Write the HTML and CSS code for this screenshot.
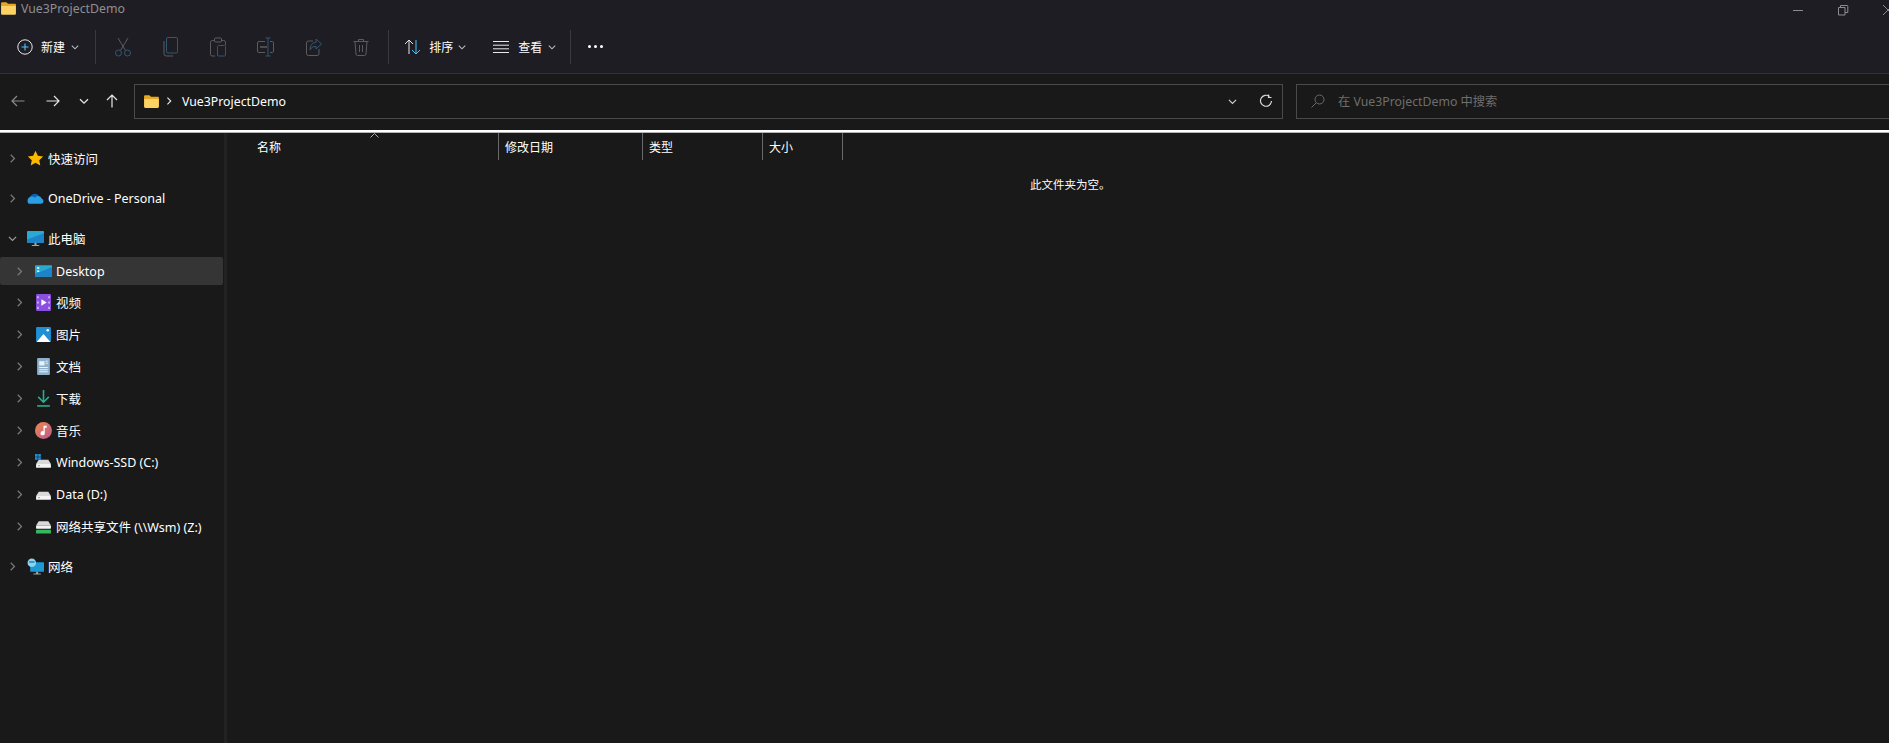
FILE: index.html
```html
<!DOCTYPE html>
<html lang="zh-CN">
<head>
    <meta charset="UTF-8">
    <title>Vue3ProjectDemo</title>
    <link rel="stylesheet" href="styles.css">
</head>
<body>
<svg class="defs" width="0" height="0">
    <symbol id="folder" viewBox="0 0 16 16">
        <path d="M1 3.2C1 2.5 1.5 2 2.2 2H6l1.6 1.6H14c.6 0 1 .4 1 1V6H1z" fill="#e6a823"/>
        <path d="M1 5.6h14v7.2c0 .7-.5 1.2-1.2 1.2H2.2C1.5 14 1 13.500 1 12.800z" fill="#fcd265"/>
    </symbol>
    <symbol id="chev-r" viewBox="0 0 10 10">
        <path d="M3 .8l4.200 4.200L3 9.200" fill="none" stroke="currentColor" stroke-width="1.400"/>
    </symbol>
    <symbol id="chev-d" viewBox="0 0 10 10">
        <path d="M1 3.200l4 4 4-4" fill="none" stroke="currentColor" stroke-width="1.300"/>
    </symbol>
    <symbol id="disk" viewBox="0 0 16 16">
        <path d="M3.500 5.500h9L15 9.500H1z" fill="#d9d9d9"/>
        <rect x="1" y="9.500" width="14" height="3.500" rx=".6" fill="#f4f4f4"/>
        <rect x="3" y="10.500" width="1.500" height="1" fill="#35c46a"/>
    </symbol>
</svg>

<div class="titlebar">
    <svg class="title-icon"><use href="#folder"/></svg>
    <span class="title-text">Vue3ProjectDemo</span>
    <div class="win-controls">
        <svg width="12" height="12" viewBox="0 0 12 12"><path d="M1 6.500h10" stroke="#8c8c8c"/></svg>
        <svg width="12" height="12" viewBox="0 0 12 12"><path d="M1.500 3.500h6.500v7.500H1.500zM3.500 3.500V1.500h6.500q.8 0 .8.800v6.200H8" fill="none" stroke="#8c8c8c"/></svg>
        <svg width="12" height="12" viewBox="0 0 12 12"><path d="M1 1l10 10M11 1L1 11" stroke="#8c8c8c"/></svg>
    </div>
</div>

<div class="toolbar">
    <div class="tb-btn tb-new">
        <svg width="16" height="16" viewBox="0 0 16 16"><circle cx="8" cy="8" r="7.200" fill="none" stroke="#e8e8e8"/><path d="M8 4.500v7M4.500 8h7" stroke="#4cc2ff" stroke-width="1.100"/></svg>
        <span>新建</span>
        <svg class="tb-chev"><use href="#chev-d"/></svg>
    </div>
    <div class="tb-sep"></div>
    <div class="tb-icon">
        <svg width="18" height="20" viewBox="0 0 18 20"><path d="M4 1l7.500 12.500M14 1L6.500 13.500" fill="none" stroke="#5c5c5c"/><circle cx="4.500" cy="16" r="3" fill="none" stroke="#2f5870"/><circle cx="13.500" cy="16" r="3" fill="none" stroke="#2f5870"/></svg>
    </div>
    <div class="tb-icon">
        <svg width="16" height="20" viewBox="0 0 16 20"><rect x="3.500" y=".5" width="11" height="15.500" rx="1.500" fill="none" stroke="#2f5870"/><path d="M1 4v12.500q0 2.500 2.500 2.500H10" fill="none" stroke="#5c5c5c"/></svg>
    </div>
    <div class="tb-icon">
        <svg width="16" height="20" viewBox="0 0 16 20"><path d="M4 3.500H2.500Q.5 3.500.5 5.500v12q0 1.500 2 1.500H5M11 3.500h2.500q2 0 2 2V8" fill="none" stroke="#5c5c5c"/><rect x="4.500" y="1" width="7" height="4" rx="1" fill="none" stroke="#5c5c5c"/><rect x="7.500" y="8.500" width="8" height="10.500" rx="1" fill="none" stroke="#2f5870"/></svg>
    </div>
    <div class="tb-icon">
        <svg width="17" height="20" viewBox="0 0 17 20"><path d="M8 4.500H2Q.5 4.500.5 6v8Q.5 15.500 2 15.500h6M13 4.500h2.500q1 0 1 1.500v8q0 1.500-1 1.500H13" fill="none" stroke="#5c5c5c"/><path d="M3 10h7" stroke="#5c5c5c" stroke-width="1.500"/><path d="M8.500 1h5M8.500 19h5M11 1v18" fill="none" stroke="#2f5870"/></svg>
    </div>
    <div class="tb-icon">
        <svg width="16" height="18" viewBox="0 0 16 18"><path d="M7 3H2.500Q.5 3 .5 5v10.500q0 2 2 2H11q2 0 2-2V11" fill="none" stroke="#5c5c5c"/><path d="M10 1l5.500 5-5.500 5V8.200q-4.500 0-6 3.800 0-7 6-7.700z" fill="none" stroke="#2f5870"/></svg>
    </div>
    <div class="tb-icon">
        <svg width="16" height="18" viewBox="0 0 16 18"><path d="M.5 3.500h15M5.500 3.500V1.500h5v2M2 3.500l1 12.500q.2 1.500 1.500 1.500h7q1.300 0 1.500-1.500l1-12.500M6.500 7v7M9.500 7v7" fill="none" stroke="#5c5c5c"/></svg>
    </div>
    <div class="tb-sep"></div>
    <div class="tb-btn tb-sort">
        <svg width="18" height="16" viewBox="0 0 18 16"><path d="M5 15V1M1 5l4-4 4 4" fill="none" stroke="#e8e8e8"/><path d="M12 1v14M8 11l4 4 4-4" fill="none" stroke="#4cc2ff"/></svg>
        <span>排序</span>
        <svg class="tb-chev"><use href="#chev-d"/></svg>
    </div>
    <div class="tb-btn tb-view">
        <svg width="16" height="12" viewBox="0 0 16 12"><path d="M0 .5h16M0 4.200h16M0 7.800h16M0 11.500h16" stroke="#e8e8e8"/></svg>
        <span>查看</span>
        <svg class="tb-chev"><use href="#chev-d"/></svg>
    </div>
    <div class="tb-sep"></div>
    <div class="tb-more"><i></i><i></i><i></i></div>
</div>

<div class="navbar">
    <div class="nav-btns">
        <svg class="nav-dim" width="14" height="14" viewBox="0 0 14 14"><path d="M13.500 7H1M6 2L1 7l5 5" fill="none" stroke="currentColor" stroke-width="1.200"/></svg>
        <svg width="14" height="14" viewBox="0 0 14 14"><path d="M.5 7H13M8 2l5 5-5 5" fill="none" stroke="currentColor" stroke-width="1.200"/></svg>
        <svg class="nav-chev"><use href="#chev-d"/></svg>
        <svg width="14" height="14" viewBox="0 0 14 14"><path d="M7 13.500V1M2 6l5-5 5 5" fill="none" stroke="currentColor" stroke-width="1.200"/></svg>
    </div>
    <div class="address">
        <svg class="addr-folder"><use href="#folder"/></svg>
        <svg class="addr-arrow"><use href="#chev-r"/></svg>
        <span class="addr-text">Vue3ProjectDemo</span>
        <svg class="addr-chev"><use href="#chev-d"/></svg>
        <svg class="addr-refresh" width="14" height="14" viewBox="0 0 14 14"><path d="M10.500 2.500A5.500 5.500 0 1 0 12.500 7" fill="none" stroke="currentColor" stroke-width="1.200"/><path d="M9.500 .5v3h3" fill="none" stroke="currentColor" stroke-width="1.200"/></svg>
    </div>
    <div class="search">
        <svg width="14" height="14" viewBox="0 0 14 14"><circle cx="8.500" cy="5.500" r="4.500" fill="none" stroke="#6b6b6b"/><path d="M5.200 8.800L.5 13.500" stroke="#6b6b6b"/></svg>
        <span>在 Vue3ProjectDemo 中搜索</span>
    </div>
</div>

<div class="rule"></div>

<div class="main">
    <div class="sidebar">
        <div class="tree-group">
            <div class="row">
                <svg class="chev"><use href="#chev-r"/></svg>
                <svg class="ico" viewBox="0 0 16 16"><path d="M8 .8l2.200 4.700 5 .6-3.700 3.500 1 5L8 12.100l-4.500 2.500 1-5L.8 6.100l5-.6z" fill="#fdb900"/></svg>
                <span>快速访问</span>
            </div>
        </div>
        <div class="tree-group">
            <div class="row">
                <svg class="chev"><use href="#chev-r"/></svg>
                <svg class="ico" viewBox="0 0 16 16"><path d="M3 8.500a4.500 4.500 0 0 1 8.500-2.500 3.500 3.500 0 0 1 2 2.500z" fill="#0a64b4"/><path d="M1.600 13h11.500a2.500 2.500 0 0 0 .6-4.900 3.500 3.500 0 0 0-6.300-.8A3 3 0 0 0 1.600 13z" fill="#2a9fe6"/></svg>
                <span>OneDrive - Personal</span>
            </div>
        </div>
        <div class="tree-group">
            <div class="row">
                <svg class="chev chev-open"><use href="#chev-d"/></svg>
                <svg class="ico" viewBox="0 0 16 16"><rect x="0" y="1" width="16" height="11" rx=".8" fill="#2aa9d3"/><path d="M0 9l16-6v8.200q0 .8-.8.800H.8Q0 12 0 11.200z" fill="#1d84c9"/><path d="M7 12h2v2H7zM4.500 14h7v1h-7z" fill="#9aa5ad"/></svg>
                <span>此电脑</span>
            </div>
            <div class="row row-child row-active">
                <svg class="chev"><use href="#chev-r"/></svg>
                <svg class="ico" viewBox="0 0 16 16"><rect x="0" y="2" width="16" height="11" rx=".8" fill="#2aa9d3"/><path d="M0 10l16-6v8.200q0 .8-.8.800H.8Q0 13 0 12.200z" fill="#1d84c9"/><path d="M2 4h2v1.500H2zM2 7h2v1.500H2z" fill="#fff"/></svg>
                <span>Desktop</span>
            </div>
            <div class="row row-child">
                <svg class="chev"><use href="#chev-r"/></svg>
                <svg class="ico" viewBox="0 0 16 16"><rect x="1" y="0" width="14" height="16" rx="1" fill="#8a4fe0"/><path d="M2 2h1.500v2H2zM2 7h1.500v2H2zM2 12h1.500v2H2zM12.500 2H14v2h-1.500zM12.500 7H14v2h-1.500zM12.500 12H14v2h-1.500z" fill="#d5bcf7"/><path d="M6 5l5 3-5 3z" fill="#fff"/></svg>
                <span>视频</span>
            </div>
            <div class="row row-child">
                <svg class="chev"><use href="#chev-r"/></svg>
                <svg class="ico" viewBox="0 0 16 16"><rect x="1" y="1" width="14" height="14" rx="1" fill="#1f8fd6"/><path d="M1.500 15L8 7.500 14.500 15z" fill="#fff"/><circle cx="12" cy="4" r="1.200" fill="#fff"/></svg>
                <span>图片</span>
            </div>
            <div class="row row-child">
                <svg class="chev"><use href="#chev-r"/></svg>
                <svg class="ico" viewBox="0 0 16 16"><rect x="2" y="0" width="12" height="16" rx="1" fill="#8fb0cc"/><path d="M4 3h5v4H4z" fill="#e9f0f6"/><path d="M10 3h2M10 5h2M4 9h8M4 11h8M4 13h8" stroke="#e9f0f6"/></svg>
                <span>文档</span>
            </div>
            <div class="row row-child">
                <svg class="chev"><use href="#chev-r"/></svg>
                <svg class="ico" viewBox="0 0 16 16"><path d="M8 0v11M3 6.500l5 5 5-5" fill="none" stroke="#27b08f" stroke-width="1.500"/><path d="M2 15h12" stroke="#27b08f" stroke-width="1.500"/></svg>
                <span>下载</span>
            </div>
            <div class="row row-child">
                <svg class="chev"><use href="#chev-r"/></svg>
                <svg class="ico" viewBox="0 0 16 16"><defs><linearGradient id="musicfill" x1="0" y1="0" x2="1" y2="1"><stop offset="0" stop-color="#ee8a50"/><stop offset="1" stop-color="#b9588f"/></linearGradient></defs><circle cx="8" cy="8" r="8" fill="url(#musicfill)"/><path d="M8 3.500h3v1.800H9.200v5.200a2 2 0 1 1-1.200-1.800z" fill="#fff"/></svg>
                <span>音乐</span>
            </div>
            <div class="row row-child">
                <svg class="chev"><use href="#chev-r"/></svg>
                <svg class="ico" viewBox="0 0 16 16"><use href="#disk"/><path d="M0 0h2.500v2.500H0zM3 0h2.500v2.500H3zM0 3h2.500v2.500H0zM3 3h2.500v2.500H3z" fill="#1f8fd6"/></svg>
                <span>Windows-SSD (C:)</span>
            </div>
            <div class="row row-child">
                <svg class="chev"><use href="#chev-r"/></svg>
                <svg class="ico"><use href="#disk"/></svg>
                <span>Data (D:)</span>
            </div>
            <div class="row row-child">
                <svg class="chev"><use href="#chev-r"/></svg>
                <svg class="ico" viewBox="0 0 16 16"><path d="M3.500 3h9L15 7H1z" fill="#d9d9d9"/><rect x="1" y="7" width="14" height="3" rx=".5" fill="#f4f4f4"/><rect x="1" y="11" width="14" height="3.500" rx=".5" fill="#35b85e"/></svg>
                <span>网络共享文件 (\\Wsm) (Z:)</span>
            </div>
        </div>
        <div class="tree-group">
            <div class="row">
                <svg class="chev"><use href="#chev-r"/></svg>
                <svg class="ico" viewBox="0 0 16 16"><rect x="3" y="4" width="13" height="9" rx=".8" fill="#1d9ad6"/><path d="M8.500 13h2v1.500h-2zM6 14.500h7v1H6z" fill="#9aa5ad"/><circle cx="4.500" cy="4.500" r="4" fill="#8fd3ef"/><path d="M2 3h5v1.500H2z" fill="#2b85bb"/></svg>
                <span>网络</span>
            </div>
        </div>
    </div>
    <div class="content">
        <div class="col-head">
            <div class="col col-name">名称<svg class="sort-caret" width="9" height="5" viewBox="0 0 9 5"><path d="M.5 4.500l4-4 4 4" fill="none" stroke="#a8a8a8"/></svg></div>
            <div class="col col-date">修改日期</div>
            <div class="col col-type">类型</div>
            <div class="col col-size">大小</div>
        </div>
        <div class="empty">此文件夹为空。</div>
    </div>
</div>
</body>
</html>
```

FILE: styles.css
```css
* { box-sizing: border-box; }
html, body { height: 100%; }
body { margin: 0; height: 743px; overflow: hidden; background: #191919; color: #fff; font-family: "Noto Sans", "Noto Sans CJK SC", sans-serif; font-size: 12px; display: flex; flex-direction: column; }
svg { display: block; flex: none; }
.defs { position: absolute; }

.titlebar { height: 22px; background: #1f1d24; display: flex; align-items: center; color: #8f8f8f; }
.title-icon { width: 17px; height: 17px; margin-top: -5px; }
.title-text { margin-left: 4px; margin-top: -5px; font-size: 12.300px; }
.win-controls { margin-left: auto; margin-right: -5px; margin-top: -3px; display: flex; gap: 33px; }

.toolbar { height: 52px; background: #1f1d24; border-bottom: 1px solid #333; display: flex; align-items: center; padding: 0 0 2px 17px; }
.tb-btn { display: flex; align-items: center; color: #fff; }
.tb-btn span { margin-left: 8px; }
.tb-chev { width: 8px; height: 8px; margin-left: 6px; color: #bdbdbd; }
.tb-new { width: 78px; }
.tb-sep { width: 1px; height: 34px; background: #3a3a3e; }
.tb-icon { width: 47.700px; display: flex; justify-content: center; }
.toolbar .tb-sep + .tb-icon { margin-left: 3px; }
.tb-icon + .tb-sep { margin-left: 3px; }
.tb-sort { margin-left: 15px; width: 90px; }
.tb-sort span { margin-left: 7px; }
.tb-sort .tb-chev { margin-left: 5px; }
.tb-view { width: 77px; margin-left: -1px; }
.tb-view span { margin-left: 9px; }
.tb-more { margin-left: 17px; display: flex; gap: 3px; }
.tb-more i { width: 3px; height: 3px; border-radius: 50%; background: #fff; }

.navbar { height: 56px; display: flex; align-items: center; padding-bottom: 2px; }
.nav-btns { width: 134px; padding-left: 11px; display: flex; align-items: center; color: #e6e6e6; }
.nav-btns svg { margin-right: 21px; }
.nav-btns .nav-dim { color: #8a8a8a; }
.nav-btns .nav-chev { width: 10px; height: 10px; margin-right: 16px; margin-left: -2px; }
.address { width: 1149px; height: 35px; border: 1px solid #4a4a4a; display: flex; align-items: center; padding-left: 8px; }
.addr-folder { width: 17px; height: 17px; }
.addr-arrow { width: 8px; height: 8px; margin-left: 5px; color: #e6e6e6; }
.addr-text { margin-left: 9px; font-size: 12.300px; }
.addr-chev { width: 9px; height: 9px; margin-left: auto; color: #cfcfcf; }
.addr-refresh { margin: 0 9px 0 22px; color: #d8d8d8; }
.search { flex: 1; height: 35px; margin-left: 13px; border: 1px solid #4a4a4a; border-right: 0; display: flex; align-items: center; padding-left: 14px; color: #6e6e6e; }
.search span { margin-left: 13px; font-size: 12.300px; }

.rule { height: 3px; background: #fff; border-bottom: 1px solid #b5b5b5; flex: none; }

.main { flex: 1; display: flex; min-height: 0; }
.sidebar { width: 227px; padding: 9px 0 0; border-right: 3px solid #222; flex: none; }
.tree-group { margin-bottom: 8px; }
.row { height: 32px; display: flex; align-items: center; padding-left: 8px; padding-top: 1px; font-size: 12.500px; }
.row span { margin-left: 4px; white-space: nowrap; }
.chev { width: 9px; height: 9px; color: #7a7a7a; }
.chev-open { color: #a0a0a0; }
.ico { width: 17px; height: 17px; margin-left: 10px; }
.row-child { padding-left: 15px; padding-top: 0; }
.row-child .ico { margin-left: 11px; }
.row-active { background: #353535; height: 28px; margin: 3px 1px 1px 0; border-radius: 2px; }

.content { flex: 1; position: relative; }
.col-head { display: flex; height: 27px; }
.col { position: relative; border-right: 1px solid #6a6a6a; padding-top: 6px; line-height: 17px; }
.col-name { width: 272px; padding-left: 30px; }
.col-date { width: 144px; padding-left: 6px; }
.col-type { width: 120px; padding-left: 6px; }
.col-size { width: 80px; padding-left: 6px; }
.sort-caret { position: absolute; left: 143px; top: 0; }
.empty { margin: 16px 0 0; padding-left: 803px; line-height: 17px; font-size: 11.500px; }
```
